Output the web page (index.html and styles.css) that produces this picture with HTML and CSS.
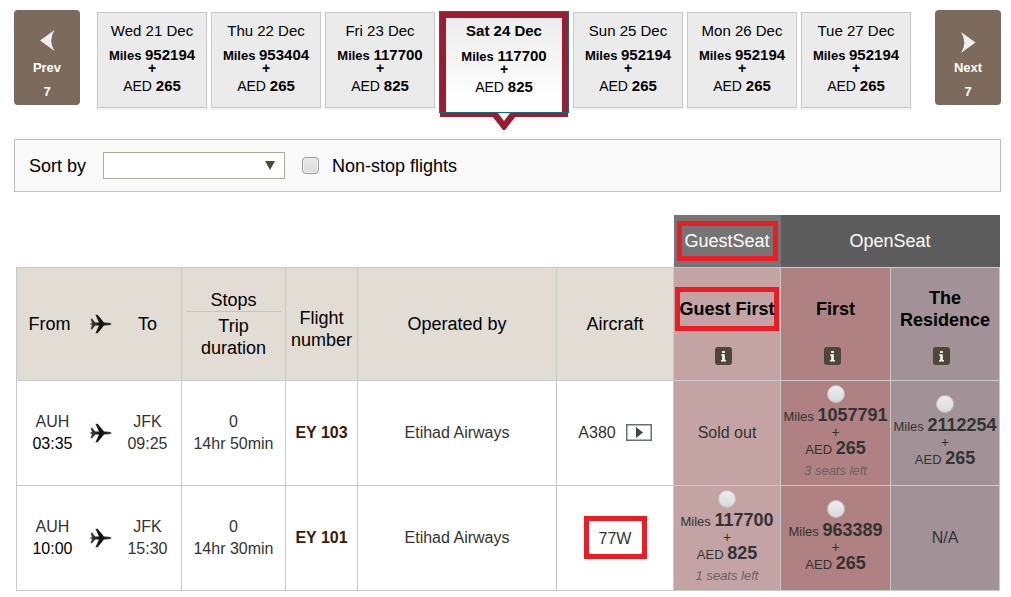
FILE: index.html
```html
<!DOCTYPE html>
<html lang="en">
<head>
<meta charset="utf-8">
<title>Select flights</title>
<link rel="stylesheet" href="styles.css">
</head>
<body>
<svg class="defs" aria-hidden="true">
  <defs>
    <linearGradient id="shade" x1="0" x2="1" y1="0" y2="0"><stop offset="0" stop-color="#444"/><stop offset=".5" stop-color="#0c0c0c"/><stop offset="1" stop-color="#444"/></linearGradient>
    <symbol id="plane" viewBox="0 0 22 20">
      <path fill="url(#shade)" d="M0.6 4.8H2.2L5.2 8.6H9L5.4 0.8H7.6L14 8.4L19 8.8Q21.4 9.2 21.6 10Q21.4 10.8 19 11.2L14 11.6L7.6 19.2H5.4L9 11.4H5.2L2.2 15.2H0.6L2 10.8H0.4V9.2H2Z"/>
    </symbol>
    <symbol id="info" viewBox="0 0 17 18">
      <rect width="17" height="18" rx="3" fill="#4f4635"/>
      <path fill="#fff" d="M7.200 4H9.800V6H7.200zM6.200 7.300H9.800V13H11V14.500H6V13H7.200V8.700H6.200z"/>
    </symbol>
  </defs>
</svg>

<nav class="dates" aria-label="Departure date">
  <button class="step" type="button">
    <svg class="step-arrow" viewBox="0 0 16 21"><path fill="#eee" d="M1 10.5L15.500 0Q9 10.500 15.500 21Z"/></svg>
    <span>Prev</span><span>7</span>
  </button>
  <div class="days">
    <button class="day" type="button"><span class="date">Wed 21 Dec</span><span class="miles">Miles <b>952194</b></span><span class="plus">+</span><span class="cash">AED <b>265</b></span></button>
    <button class="day" type="button"><span class="date">Thu 22 Dec</span><span class="miles">Miles <b>953404</b></span><span class="plus">+</span><span class="cash">AED <b>265</b></span></button>
    <button class="day" type="button"><span class="date">Fri 23 Dec</span><span class="miles">Miles <b>117700</b></span><span class="plus">+</span><span class="cash">AED <b>825</b></span></button>
    <div class="chosen">
      <button class="day day-on" type="button" aria-current="date"><span class="date">Sat 24 Dec</span><span class="miles">Miles <b>117700</b></span><span class="plus">+</span><span class="cash">AED <b>825</b></span></button>
      <div class="strip"><svg class="pointer" viewBox="0 0 24 17"><path fill="#9e1b32" d="M0 0H24V3L13 17H11L0 3Z"/><path fill="#fff" d="M6 0H18L12 8Z"/></svg></div>
    </div>
    <button class="day" type="button"><span class="date">Sun 25 Dec</span><span class="miles">Miles <b>952194</b></span><span class="plus">+</span><span class="cash">AED <b>265</b></span></button>
    <button class="day" type="button"><span class="date">Mon 26 Dec</span><span class="miles">Miles <b>952194</b></span><span class="plus">+</span><span class="cash">AED <b>265</b></span></button>
    <button class="day" type="button"><span class="date">Tue 27 Dec</span><span class="miles">Miles <b>952194</b></span><span class="plus">+</span><span class="cash">AED <b>265</b></span></button>
  </div>
  <button class="step" type="button">
    <svg class="step-arrow step-arrow-next" viewBox="0 0 16 21"><path fill="#eee" d="M15.500 10.500L1 0Q7.500 10.500 1 21Z"/></svg>
    <span>Next</span><span>7</span>
  </button>
</nav>

<form class="filters">
  <label for="sort">Sort by</label>
  <span class="select">
    <select id="sort"><option value=""></option><option>Price</option><option>Duration</option></select>
    <svg class="caret" viewBox="0 0 10 9"><path fill="#4a4a3a" d="M0 0H10L5 9Z"/></svg>
  </span>
  <input class="check" type="checkbox" id="nonstop">
  <label for="nonstop">Non-stop flights</label>
</form>

<table class="flights">
  <colgroup>
    <col class="c-route"><col class="c-stops"><col class="c-number"><col class="c-operator"><col class="c-aircraft"><col class="c-guest"><col class="c-first"><col class="c-residence">
  </colgroup>
  <thead>
    <tr class="groups">
      <td colspan="5"></td>
      <th class="g-guest" scope="col"><div class="mark mark-group">GuestSeat</div></th>
      <th class="g-open" colspan="2" scope="colgroup">OpenSeat</th>
    </tr>
    <tr class="heads">
      <th scope="col"><div class="route"><span class="from">From</span><svg class="plane"><use href="#plane"/></svg><span>To</span></div></th>
      <th scope="col"><div class="stops">Stops</div><div class="trip">Trip duration</div></th>
      <th class="low" scope="col">Flight number</th>
      <th scope="col">Operated by</th>
      <th scope="col">Aircraft</th>
      <th class="fare guest" scope="col"><div class="mark fare-name">Guest First</div><button class="info" type="button" aria-label="About Guest First"><svg><use href="#info"/></svg></button></th>
      <th class="fare first" scope="col"><div class="fare-name">First</div><button class="info" type="button" aria-label="About First"><svg><use href="#info"/></svg></button></th>
      <th class="fare residence" scope="col"><div class="fare-name">The Residence</div><button class="info" type="button" aria-label="About The Residence"><svg><use href="#info"/></svg></button></th>
    </tr>
  </thead>
  <tbody>
    <tr>
      <td><div class="route"><span>AUH<br><span class="leave">03:35</span></span><svg class="plane"><use href="#plane"/></svg><span>JFK<br>09:25</span></div></td>
      <td>0<br>14hr 50min</td>
      <td><a class="flight" href="#ey103">EY 103</a></td>
      <td>Etihad Airways</td>
      <td><div class="aircraft">A380 <button class="play" type="button" aria-label="Play A380 video"><svg viewBox="0 0 26 17"><path fill="#fff" stroke="#68716e" stroke-width="1.500" d="M.75 .75H25.250V16.250H.75Z"/><path fill="#3c4845" d="M10 3L17 8.500L10 14Z"/></svg></button></div></td>
      <td class="guest">Sold out</td>
      <td class="first"><label class="offer"><input class="pick" type="radio" name="fare"><span class="price">Miles <b>1057791</b></span><span class="and">+</span><span class="price">AED <b>265</b></span><em class="left">3 seats left</em></label></td>
      <td class="residence"><label class="offer"><input class="pick" type="radio" name="fare"><span class="price">Miles <b>2112254</b></span><span class="and">+</span><span class="price">AED <b>265</b></span></label></td>
    </tr>
    <tr>
      <td><div class="route"><span>AUH<br><span class="leave">10:00</span></span><svg class="plane"><use href="#plane"/></svg><span>JFK<br>15:30</span></div></td>
      <td>0<br>14hr 30min</td>
      <td><a class="flight" href="#ey101">EY 101</a></td>
      <td>Etihad Airways</td>
      <td><div class="mark mark-craft">77W</div></td>
      <td class="guest"><label class="offer"><input class="pick" type="radio" name="fare"><span class="price">Miles <b>117700</b></span><span class="and">+</span><span class="price">AED <b>825</b></span><em class="left">1 seats left</em></label></td>
      <td class="first"><label class="offer"><input class="pick" type="radio" name="fare"><span class="price">Miles <b>963389</b></span><span class="and">+</span><span class="price">AED <b>265</b></span></label></td>
      <td class="residence">N/A</td>
    </tr>
  </tbody>
</table>
</body>
</html>
```
FILE: styles.css
```css
* { box-sizing: border-box; }
body {
  margin: 0;
  padding: 10px 10px 0 14px;
  background: #fff;
  color: #000;
  font: 16px/22px "Liberation Sans", Arial, sans-serif;
}
button, input, select { font: inherit; color: inherit; margin: 0; padding: 0; border: 0; }
button { cursor: pointer; }
svg { display: block; }
.defs { position: absolute; width: 0; height: 0; }

/* date strip */
.dates { display: flex; align-items: flex-start; }
.step {
  flex: none;
  display: flex;
  flex-direction: column;
  align-items: center;
  width: 66px;
  height: 95px;
  padding-top: 20px;
  border-radius: 4px;
  background: #7c6a5c;
  color: #fff;
  font-size: 13px;
  font-weight: bold;
  line-height: 24px;
}
.step-arrow { width: 16px; height: 21px; margin-bottom: 5px; }
.step-arrow-next { margin: 2px 0 3px; }
.days { flex: 1; display: flex; align-items: flex-start; gap: 4px; margin: 1px 24px 0 17px; }
.day {
  flex: 1;
  display: flex;
  flex-direction: column;
  align-items: center;
  margin-top: 1px;
  height: 96px;
  padding-top: 8px;
  border: 1px solid #c8c8c8;
  background: #ebebeb;
  box-shadow: 0 2px 0 #f3f3f3;
  white-space: nowrap;
}
.date { font-size: 15px; line-height: 20px; margin-bottom: 7px; }
.miles { font-size: 13px; font-weight: bold; line-height: 14px; }
.day b { font-size: 15px; }
.plus { font-size: 14px; font-weight: bold; line-height: 10px; }
.cash { font-size: 14px; line-height: 20px; margin-top: 3px; }
.chosen { flex: none; width: 130px; }
.day-on {
  width: 100%;
  height: 102px;
  margin: 0;
  padding-top: 9px;
  border: 1px solid #00767c;
  background: linear-gradient(#ebebeb, #fff 90%);
  box-shadow: inset 6px 0 #9e1b32, inset -6px 0 #9e1b32, inset 0 6px #9e1b32;
}
.day-on .date { font-weight: bold; margin-bottom: 8px; }
.strip { position: relative; height: 4px; margin: 0 1px 14px; background: #9e1b32; }
.pointer { position: absolute; top: 0; left: 50%; width: 24px; height: 17px; margin-left: -12px; }

/* sort and filter bar */
.filters {
  display: flex;
  align-items: center;
  height: 53px;
  margin-top: 8px;
  padding-left: 14px;
  border: 1px solid #c0c0c0;
  background: #f9f9f9;
  font-size: 18px;
}
.select { position: relative; margin: 0 17px; }
.select select {
  display: block;
  appearance: none;
  width: 182px;
  height: 27px;
  padding: 0 24px 0 8px;
  border: 1px solid #a9ac98;
  background: #fff;
}
.caret { position: absolute; top: 9px; right: 10px; width: 10px; height: 9px; pointer-events: none; }
.check {
  appearance: none;
  width: 17px;
  height: 17px;
  margin-right: 13px;
  border: 1px solid #999;
  border-radius: 4px;
  background: linear-gradient(#e9e9e9, #dadada);
  box-shadow: inset 0 0 0 1px #f1f1f1;
}

/* flights */
.flights {
  width: calc(100% - 3px);
  margin: 23px 0 0 2px;
  border-collapse: collapse;
  table-layout: fixed;
  text-align: center;
  color: #333;
}
.c-route { width: 165px; }
.c-stops { width: 104px; }
.c-number { width: 72px; }
.c-aircraft { width: 117px; }
.c-guest { width: 107px; }
.c-first { width: 110px; }
.c-residence { width: 109px; }
th, td { padding: 0; border: 1px solid #c9c9c9; }
th { color: #000; font-size: 18px; font-weight: normal; }
.groups { height: 52px; }
.groups > * { border-width: 0 0 1px; color: #fff; }
.groups .g-guest { background: #757575; }
.groups .g-open { background: #5d5d5d; }
.heads { height: 113px; }
.heads th { background: #e1ddd5; }
.heads .low { padding-top: 10px; }
tbody tr { height: 105px; }
.flights .guest { background: #c3a3a4; }
.flights .first { background: #af8182; }
.flights .residence { background: #a29297; }

.route { display: grid; grid-template-columns: 71px 26px 1fr; align-items: center; justify-items: center; }
.from { padding-right: 6px; }
.plane { width: 22px; height: 20px; }
.leave { color: #000; }
.stops { margin: 0 4px; border-bottom: 1px solid #c4c4c4; }
.trip { padding: 3px 12px 0; }
.flight { color: #401808; font-weight: bold; text-decoration: none; }

.mark { border: 5px solid #ed1c24; white-space: nowrap; }
.mark-group { display: flex; align-items: center; justify-content: center; height: 40px; margin: 0 3px; }
.mark-craft { width: 63px; height: 43px; margin: 0 auto; padding-top: 7px; }

.heads .fare { padding-top: 19px; vertical-align: top; font-weight: bold; }
.fare-name { display: flex; align-items: center; justify-content: center; height: 44px; margin: 0 1px; }
.info { display: inline-block; vertical-align: top; width: 17px; height: 18px; margin: 16px 7px 0 0; background: none; }
.info svg { width: 17px; height: 18px; }

.aircraft { display: flex; align-items: center; justify-content: center; gap: 10px; }
.play { width: 26px; height: 17px; background: none; }

.offer { display: flex; flex-direction: column; align-items: center; white-space: nowrap; }
.pick {
  appearance: none;
  width: 18px;
  height: 18px;
  margin-bottom: 1px;
  border: 1px solid #c4bcbc;
  border-radius: 50%;
  background: linear-gradient(#ededed, #dadada);
}
.price { font-size: 13px; line-height: 22px; }
.price b { font-size: 18px; }
.and { font-size: 14px; line-height: 9px; }
.left { color: #6b6363; font-size: 13px; line-height: 20px; }
```
